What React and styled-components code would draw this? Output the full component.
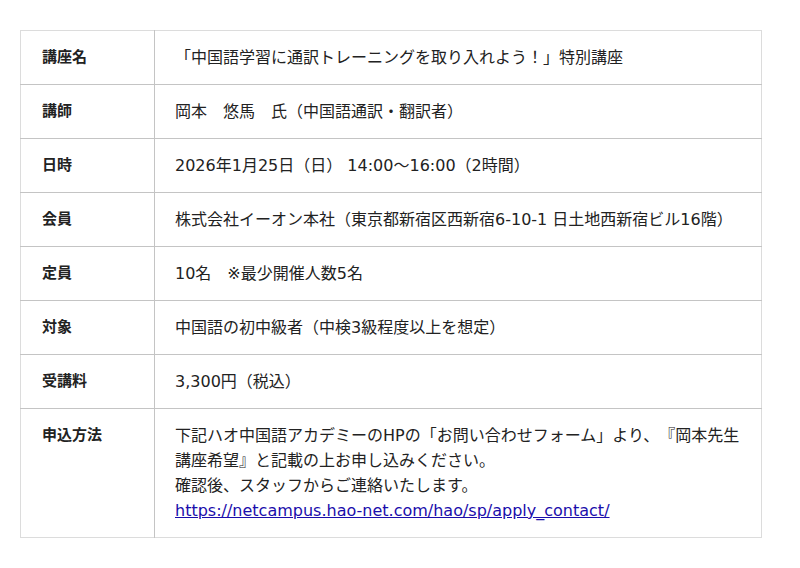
import React from 'react'
import styled, { createGlobalStyle } from 'styled-components'

const GlobalStyle = createGlobalStyle`
  body {
    margin: 0;
    background: #fff;
    font-family: "DejaVu Sans", "Noto Sans CJK JP", sans-serif;
    color: #222;
    text-spacing-trim: space-all;
  }
`

const Page = styled.div`
  padding: 30px 0 0 20px;
`

const Table = styled.table`
  width: 742px;
  border-collapse: collapse;
  border: 1px solid #dcdcdc;
  font-size: 16px;
  line-height: 25px;
`

const Row = styled.tr`
  border-top: 1px solid #c4c4c4;
  &:first-child {
    border-top: 1px solid #dcdcdc;
  }
`

const Label = styled.th`
  width: 134px;
  box-sizing: border-box;
  text-align: left;
  vertical-align: top;
  font-weight: bold;
  font-size: 15px;
  padding: 14px 21px;
  border-right: 1px solid #c4c4c4;
`

const Value = styled.td`
  vertical-align: top;
  padding: 14px 16px 14px 20px;
`

const Link = styled.a`
  color: #1a0dab;
  text-decoration: underline;
`

const rows = [
  ['講座名', '「中国語学習に通訳トレーニングを取り入れよう！」特別講座'],
  ['講師', '岡本　悠馬　氏（中国語通訳・翻訳者）'],
  ['日時', '2026年1月25日（日） 14:00〜16:00（2時間）'],
  ['会員', '株式会社イーオン本社（東京都新宿区西新宿6-10-1 日土地西新宿ビル16階）'],
  ['定員', '10名　※最少開催人数5名'],
  ['対象', '中国語の初中級者（中検3級程度以上を想定）'],
  ['受講料', '3,300円（税込）'],
]

function App() {
  return (
    <Page>
      <GlobalStyle />
      <Table>
        <tbody>
          {rows.map(([label, value]) => (
            <Row key={label}>
              <Label>{label}</Label>
              <Value>{value}</Value>
            </Row>
          ))}
          <Row>
            <Label>申込方法</Label>
            <Value>
              下記ハオ中国語アカデミーのHPの「お問い合わせフォーム」より、『岡本先生講座希望』と記載の上お申し込みください。
              <br />
              確認後、スタッフからご連絡いたします。
              <br />
              <Link href="#">https://netcampus.hao-net.com/hao/sp/apply_contact/</Link>
            </Value>
          </Row>
        </tbody>
      </Table>
    </Page>
  )
}

export default App
